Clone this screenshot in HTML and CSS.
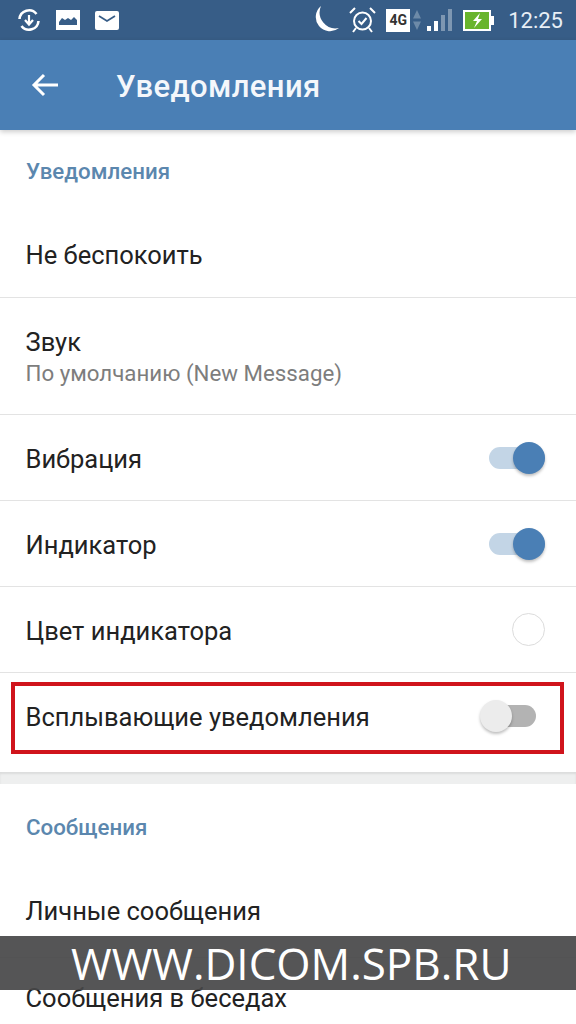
FILE: index.html
```html
<!DOCTYPE html>
<html lang="ru">
<head>
    <meta charset="UTF-8">
    <meta name="viewport" content="width=device-width, initial-scale=1.0">
    <title>Уведомления</title>
    <link rel="stylesheet" href="styles.css">
</head>
<body>
    <div class="phone">
        <div class="statusbar">
            <div class="status-left">
                <svg class="ic-sync" width="24" height="24" viewBox="0 0 24 24">
                    <path d="M2.500 11a9.500 9.500 0 0 1 17-5M21.500 13a9.500 9.500 0 0 1-17 5" fill="none" stroke="#fff" stroke-width="2.600"/>
                    <path d="M12 7v8M8 12l4 4.500 4-4.500" fill="none" stroke="#fff" stroke-width="2.200"/>
                </svg>
                <svg class="ic-pic" width="24" height="20" viewBox="0 0 24 20">
                    <path d="M0 0h24v20H0z" fill="#fff"/>
                    <path d="M3 15V12l3-4 3 2 3-2 3 2 3-3 3 3v5z" fill="#375d87"/>
                </svg>
                <svg class="ic-mail" width="24" height="19" viewBox="0 0 24 19">
                    <rect width="24" height="19" rx="2" fill="#fff"/>
                    <path d="M4 5l8 5 8-5" fill="none" stroke="#375d87" stroke-width="1.800"/>
                </svg>
            </div>
            <div class="status-right">
                <svg class="ic-moon" width="28" height="28" viewBox="0 0 28 28">
                    <path d="M10 0a14 14 0 1 0 18 22A16 16 0 0 1 10 0z" fill="#fff"/>
                </svg>
                <svg class="ic-alarm" width="27" height="26" viewBox="0 0 27 26">
                    <circle cx="13.500" cy="14" r="8.500" fill="none" stroke="#fff" stroke-width="2"/>
                    <path d="M9.500 14l3 3 5-6M1 6l5-5M26 6l-5-5M4 25l3-4M23 25l-3-4" fill="none" stroke="#fff" stroke-width="2"/>
                </svg>
                <div class="net">
                    <span class="net-badge">4G</span>
                    <svg width="8" height="22" viewBox="0 0 8 22">
                        <path d="M4 1l4 8.500H0zM4 21L0 12.500h8z" fill="#6d8aa8"/>
                    </svg>
                </div>
                <svg class="ic-signal" width="26" height="24" viewBox="0 0 26 24">
                    <rect x="0" y="18" width="4" height="5" fill="#fff"/>
                    <rect x="7" y="13" width="4" height="10" fill="#fff"/>
                    <rect x="14" y="7" width="4" height="16" fill="#7e97b2"/>
                    <rect x="21" y="1" width="4" height="22" fill="#7e97b2"/>
                </svg>
                <svg class="ic-battery" width="31" height="21" viewBox="0 0 31 21">
                    <rect x="1" y="1" width="26" height="19" fill="#68b42c" stroke="#fff" stroke-width="2"/>
                    <rect x="28" y="6" width="3" height="9" fill="#fff"/>
                    <path d="M17 3l-7 8h4l-3 7 8-9h-4z" fill="#fff"/>
                </svg>
                <span class="clock">12:25</span>
            </div>
        </div>

        <div class="appbar">
            <svg class="back" width="28" height="24" viewBox="0 0 28 24">
                <path d="M27 12H3M13 2L3 12l10 10" fill="none" stroke="#fff" stroke-width="3"/>
            </svg>
            <h1 class="title">Уведомления</h1>
        </div>

        <div class="section">
            <div class="section-title">Уведомления</div>
            <div class="row row-first">Не беспокоить</div>
            <div class="row row-sound">
                <div>Звук</div>
                <div class="sub">По умолчанию (New Message)</div>
            </div>
            <div class="row">
                <span class="label">Вибрация</span>
                <span class="switch on"><i class="knob"></i></span>
            </div>
            <div class="row">
                <span class="label">Индикатор</span>
                <span class="switch on"><i class="knob"></i></span>
            </div>
            <div class="row">
                <span class="label">Цвет индикатора</span>
                <span class="color-dot"></span>
            </div>
            <div class="row row-popup">
                <span class="label">Всплывающие уведомления</span>
                <span class="switch off"><i class="knob"></i></span>
                <div class="highlight"></div>
            </div>
        </div>

        <div class="gap"></div>

        <div class="section">
            <div class="section-title section-title-msg">Сообщения</div>
            <div class="row row-private">Личные сообщения</div>
            <div class="row row-chats">Сообщения в беседах</div>
        </div>

        <div class="watermark">WWW.DICOM.SPB.RU</div>
    </div>
</body>
</html>
```

FILE: styles.css
```css
* {
    box-sizing: border-box;
}

html,
body {
    margin: 0;
    padding: 0;
    height: 100%;
    background: #fff;
}

.phone {
    position: relative;
    width: 576px;
    height: 1024px;
    overflow: hidden;
    font-family: Roboto, "Liberation Sans", sans-serif;
    color: #222;
}

.statusbar {
    height: 40px;
    padding: 0 13px 0 17px;
    background: #375d87;
    display: flex;
    justify-content: space-between;
    align-items: center;
}

.status-left,
.status-right,
.net {
    display: flex;
    align-items: center;
}

.status-left {
    gap: 15px;
}

.status-right {
    gap: 10px;
}

.net {
    gap: 3px;
}

.ic-signal {
    margin-left: -4px;
}

.net-badge {
    width: 24px;
    height: 23px;
    background: #fff;
    color: #333;
    font-size: 14px;
    font-weight: 700;
    line-height: 23px;
    text-align: center;
}

.clock {
    margin-left: 4px;
    color: #e8eff6;
    font-size: 22px;
}

.appbar {
    position: relative;
    height: 90px;
    padding-left: 31px;
    background: #4a7fb5;
    box-shadow: 0 2px 5px rgba(0, 0, 0, 0.2);
    display: flex;
    align-items: center;
    gap: 57px;
}

.title {
    margin: 2px 0 0;
    color: #f4f7fb;
    font-size: 31px;
    font-weight: 500;
    letter-spacing: 0.4px;
}

.section-title {
    height: 83px;
    padding: 28px 26px 0;
    color: #5b87ae;
    font-size: 22.300px;
    font-weight: 500;
}

.section-title-msg {
    height: 84px;
    padding-top: 30px;
}

.row {
    position: relative;
    height: 86px;
    padding: 0 31px 0 25.500px;
    border-bottom: 1px solid #e3e3e3;
    display: flex;
    justify-content: space-between;
    align-items: center;
    font-size: 25.500px;
}

.label {
    margin-top: 2px;
}

.row-first {
    height: 85px;
}

.row-sound {
    height: 117px;
    flex-direction: column;
    justify-content: center;
    align-items: flex-start;
}

.row-popup {
    height: 99px;
    padding-bottom: 13px;
    border-bottom: 0;
}

.row-private {
    height: 90px;
    padding-bottom: 4px;
}

.row-chats {
    padding-bottom: 6px;
    border-bottom: 0;
}

.sub {
    margin-top: 3px;
    color: #7d7d7d;
    font-size: 22.300px;
}

.switch {
    position: relative;
    height: 22px;
    border-radius: 11px;
}

.switch.on {
    width: 56px;
    background: #c3d5e6;
}

.switch.off {
    width: 46px;
    margin-right: 9px;
    background: #b3b3b3;
}

.knob {
    position: absolute;
    top: -5px;
    width: 32px;
    height: 32px;
    border-radius: 50%;
    box-shadow: 0 2px 3px rgba(0, 0, 0, 0.25);
}

.on .knob {
    right: 0;
    background: #4a7fb5;
}

.off .knob {
    left: -10px;
    background: #ececec;
}

.color-dot {
    width: 33px;
    height: 33px;
    border: 1px solid #dcdcdc;
    border-radius: 50%;
    background: #fff;
}

.highlight {
    position: absolute;
    left: 11px;
    top: 9px;
    width: 553px;
    height: 72px;
    border: 4px solid #d0141c;
}

.gap {
    height: 12px;
    background: #eeefef;
    box-shadow: inset 0 2px 2px rgba(0, 0, 0, 0.08);
}

.watermark {
    position: absolute;
    left: 0;
    top: 936px;
    width: 576px;
    height: 54px;
    padding-left: 71px;
    background: rgba(70, 70, 72, 0.92);
    color: #fff;
    font-family: "Open Sans", sans-serif;
    font-size: 44px;
    font-weight: 500;
    line-height: 55px;
    white-space: nowrap;
}
```
